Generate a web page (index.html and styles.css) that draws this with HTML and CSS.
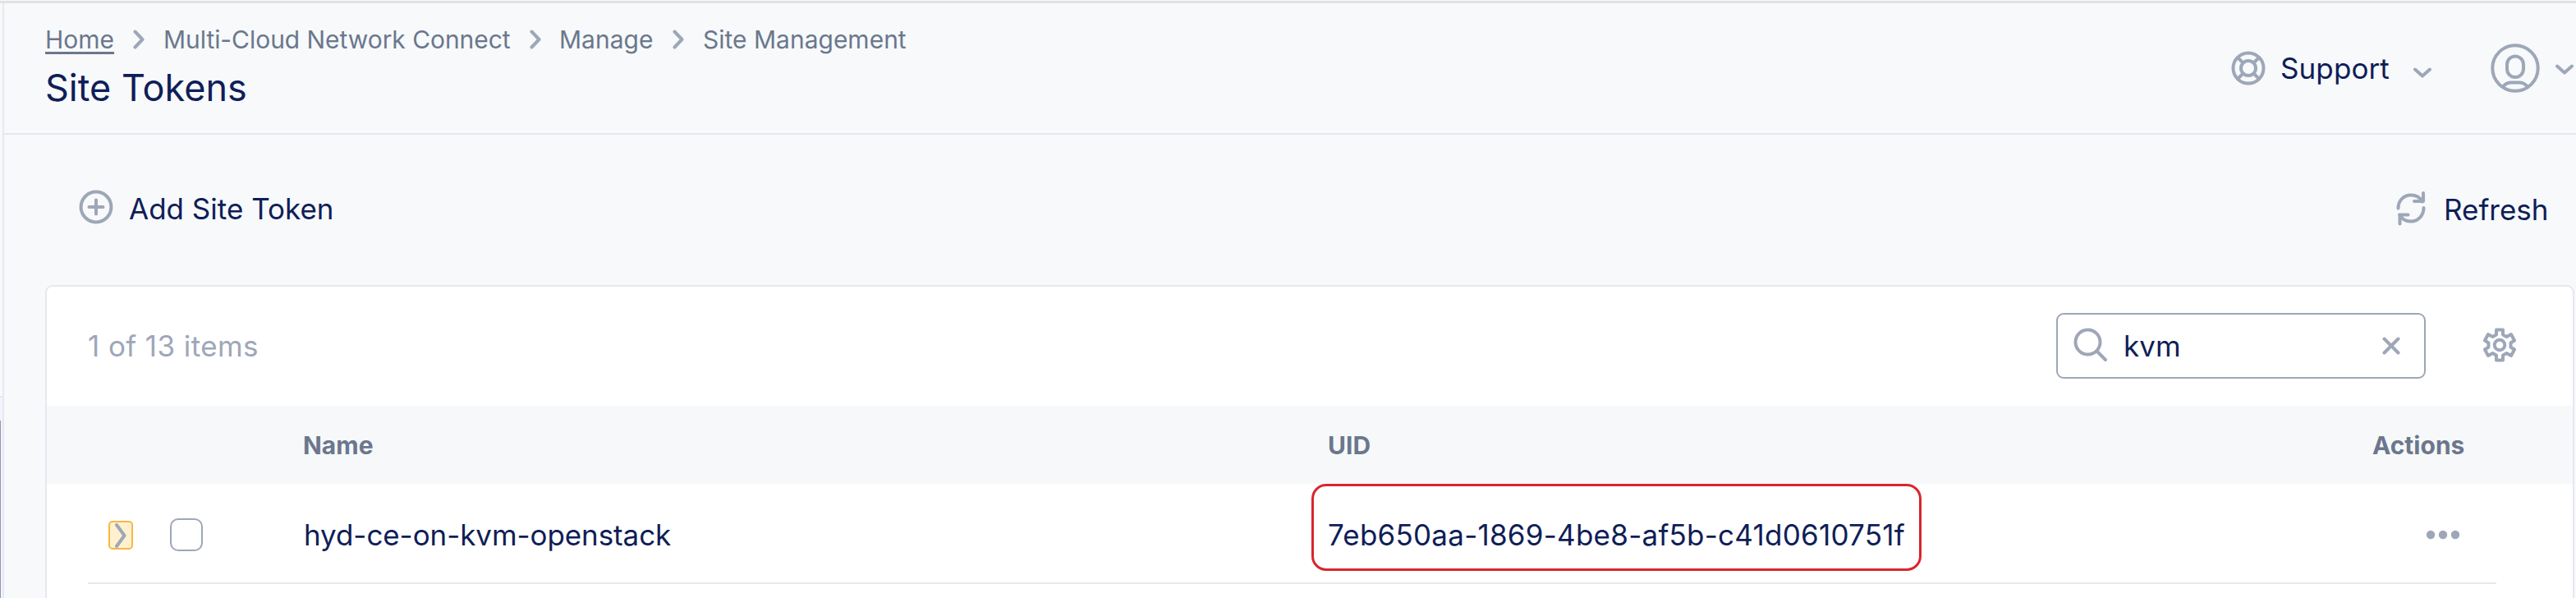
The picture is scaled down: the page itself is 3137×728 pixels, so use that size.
FILE: index.html
```html
<!DOCTYPE html>
<html lang="en">
<head>
<meta charset="utf-8">
<title>Site Tokens</title>
<link rel="stylesheet" href="styles.css">
</head>
<body>
<div class="app">
  <aside class="rail"><div class="rail-top"></div><div class="rail-gap"></div><div class="rail-active"></div></aside>
  <div class="content">
    <header class="header">
      <div class="heading">
        <nav class="crumbs">
          <a class="crumb home">Home</a>
          <svg class="sep" viewBox="0 0 14 24"><path d="M2.500 2.500 11.500 12 2.500 21.500"/></svg>
          <a class="crumb cloud">Multi-Cloud Network Connect</a>
          <svg class="sep" viewBox="0 0 14 24"><path d="M2.500 2.500 11.500 12 2.500 21.500"/></svg>
          <a class="crumb manage">Manage</a>
          <svg class="sep" viewBox="0 0 14 24"><path d="M2.500 2.500 11.500 12 2.500 21.500"/></svg>
          <a class="crumb site">Site Management</a>
        </nav>
        <h1 class="title">Site Tokens</h1>
      </div>
      <div class="account">
        <svg class="icon support-icon" viewBox="0 0 42 42"><circle cx="21" cy="21" r="18.500"/><circle cx="21" cy="21" r="9"/><path d="M8 8l6.500 6.500M34 8l-6.500 6.500M8 34l6.500-6.500M34 34l-6.500-6.500"/></svg>
        <span class="label support">Support</span>
        <svg class="icon caret" viewBox="0 0 22 13"><path d="M2 2.500 11 10.500 20 2.500"/></svg>
        <svg class="icon user" viewBox="0 0 60 60"><circle cx="30" cy="30" r="27.700"/><rect x="20" y="15.500" width="20" height="25.500" rx="10"/><path d="M15 52.500C18 49 22 47.500 25 47.500H35C38 47.500 42 49 45 52.500"/></svg>
        <svg class="icon caret user-caret" viewBox="0 0 22 13"><path d="M2 2.500 11 10.500 20 2.500"/></svg>
      </div>
    </header>
    <div class="toolbar">
      <div class="tool">
        <svg class="icon add" viewBox="0 0 42 42"><circle cx="21" cy="21" r="18.400"/><path d="M21 12.500v17M12.500 21h17"/></svg>
        <span class="label add-label">Add Site Token</span>
      </div>
      <div class="tool">
        <svg class="icon refresh-icon" viewBox="0 0 38 42"><path d="M3.500 20.500C3.500 11 10.500 4.500 19 4.500 25.500 4.500 30.500 8 33 12.500M34 2V12H23M34.500 20C34.500 29.500 27.500 36.500 19 36.500 12.500 36.500 7.500 33 5 28.500M5.500 39.500V28.500H15.500"/></svg>
        <span class="label refresh-label">Refresh</span>
      </div>
    </div>
    <main class="card">
      <div class="card-bar">
        <span class="count">1 of 13 items</span>
        <div class="search">
          <svg class="icon magnifier" viewBox="0 0 42 42"><circle cx="17.500" cy="17.500" r="15"/><path d="M28.500 28.500 39 39"/></svg>
          <span class="query">kvm</span>
          <svg class="icon clear" viewBox="0 0 22 22"><path d="M2.500 2.500 19.500 19.500M19.500 2.500 2.500 19.500"/></svg>
        </div>
        <svg class="icon gear" viewBox="0 0 42 42"><path d="M17 2.500H25V8.500L29.500 11 35 8 39 15.500 34.500 18.500V23.500L39 26.500 35 34 29.500 31 25 33.500V39.500H17V33.500L12.500 31 7 34 3 26.500 7.500 23.500V18.500L3 15.500 7 8 12.500 11 17 8.500Z"/><circle cx="21" cy="21" r="6.300"/></svg>
      </div>
      <div class="thead">
        <span class="th name">Name</span>
        <span class="th uid">UID</span>
        <span class="th actions">Actions</span>
      </div>
      <div class="row">
        <span class="expand"><svg class="icon chevron" viewBox="0 0 14 32"><path d="M2 3 11.500 16 2 29"/></svg></span>
        <span class="checkbox"></span>
        <span class="cell cell-name">hyd-ce-on-kvm-openstack</span>
        <span class="highlight"><span class="cell cell-uid">7eb650aa-1869-4be8-af5b-c41d0610751f</span></span>
        <svg class="dots" viewBox="0 0 42 12"><circle cx="6" cy="6" r="5.200"/><circle cx="21" cy="6" r="5.200"/><circle cx="36" cy="6" r="5.200"/></svg>
      </div>
    </main>
  </div>
</div>
</body>
</html>
```
FILE: styles.css
```css
* { box-sizing: border-box; }
body {
  margin: 0;
  height: 728px;
  overflow: hidden;
  background: #f7f9fb;
  font-family: Inter, "Liberation Sans", sans-serif;
  color: #0f1e57;
}
.app {
  display: flex;
  height: 728px;
  border-top: 3px solid #dfe4e1;
  margin-top: 1px;
}
.rail { width: 5px; border-right: 2px solid #e6e8f2; flex: none; }
.rail-top { height: 480px; border-bottom: 2px solid #e6e8f2; }
.rail-gap { height: 28px; background: #f3f4fb; }
.rail-active { height: 220px; border-left: 1px solid #9297ae; background: #f3f4fb; }
.content { flex: 1; min-width: 0; }
.icon, .sep { fill: none; stroke: #9ea7b8; stroke-width: 4; stroke-linecap: round; stroke-linejoin: round; flex: none; }

.header {
  display: flex;
  height: 160px;
  border-bottom: 2px solid #e6e8f2;
}
.heading { flex: 1; padding: 22px 0 0 50px; }
.crumbs { display: flex; align-items: center; height: 44px; }
.crumb { font-size: 30px; line-height: 44px; color: #6b778c; white-space: nowrap; }
.home { width: 84px; text-decoration: underline; text-decoration-thickness: 3px; text-underline-offset: 4px; }
.cloud { width: 424px; padding-left: 1px; letter-spacing: -0.05px; }
.manage { width: 115px; }
.sep { width: 14px; height: 24px; margin: 0 22px 0 23px; }
.manage + .sep { margin-right: 23px; }
.title { margin: 7px 0 0; font-size: 45px; line-height: 60px; font-weight: 400; white-space: nowrap; }
.account { display: flex; align-items: center; width: 420px; height: 158px; }
.label, .count, .query, .cell { font-size: 35px; line-height: 48px; font-weight: 400; white-space: nowrap; }
.support-icon { width: 42px; height: 42px; margin-right: 18px; }
.support { width: 162px; letter-spacing: 0.1px; }
.caret { width: 22px; height: 13px; margin-top: 10px; }
.user { width: 60px; height: 60px; margin-left: 72px; }
.user-caret { margin: 2px 0 0 19px; }

.toolbar {
  display: flex;
  justify-content: space-between;
  align-items: center;
  height: 183px;
  padding: 0 34px 0 91px;
}
.tool { display: flex; align-items: center; }
.add { width: 42px; height: 42px; margin: -7px 19px 0 0; }
.add-label { margin-top: -3px; }
.refresh-icon { width: 38px; height: 42px; margin: -3px 21px 0 0; }
.refresh-label { width: 127px; margin-top: -1px; }

.card {
  height: 400px;
  margin: 0 2px 0 50px;
  border: 2px solid #e6e8f0;
  border-radius: 9px;
  background: #fff;
}
.card-bar { display: flex; align-items: center; height: 145px; padding: 0 0 1px 50px; }
.count { flex: 1; color: #9ea7b8; letter-spacing: 0.4px; }
.search {
  display: flex;
  align-items: center;
  width: 450px;
  height: 80px;
  padding: 0 29px 0 19px;
  border: 2px solid #9ea7b8;
  border-radius: 9px;
}
.magnifier { width: 42px; height: 42px; margin: -2px 19px 0 0; }
.query { flex: 1; }
.clear { width: 22px; height: 22px; }
.gear { width: 42px; height: 42px; margin: -2px 68px 0 69px; }
.thead { display: flex; align-items: center; height: 95px; background: #f6f8fa; }
.th { font-size: 30px; line-height: 40px; font-weight: 700; color: #6b778c; }
.name { width: 1248px; margin-left: 312px; }
.uid { width: 1272px; }
.row {
  display: flex;
  align-items: flex-start;
  width: 2933px;
  height: 122px;
  margin-left: 50px;
  border-bottom: 2px solid #e6e8ee;
}
.expand {
  display: flex;
  align-items: center;
  justify-content: center;
  width: 30px;
  height: 35px;
  margin: 45px 0 0 25px;
  border: 2px solid #f6b941;
  border-radius: 5px;
  background: #fff1cd;
}
.chevron { width: 14px; height: 32px; }
.checkbox { width: 40px; height: 40px; margin: 42px 0 0 45px; border: 2px solid #9ea7b8; border-radius: 10px; }
.cell-name { width: 1227px; margin: 38px 0 0 123px; letter-spacing: -0.08px; }
.cell-uid { letter-spacing: 0.24px; }
.highlight { width: 743px; height: 106px; padding: 35px 0 0 17px; border: 3px solid #d8262e; border-radius: 18px; }
.dots { width: 42px; height: 12px; margin: 56px 0 0 614px; fill: #9ea7b8; flex: none; }
```
